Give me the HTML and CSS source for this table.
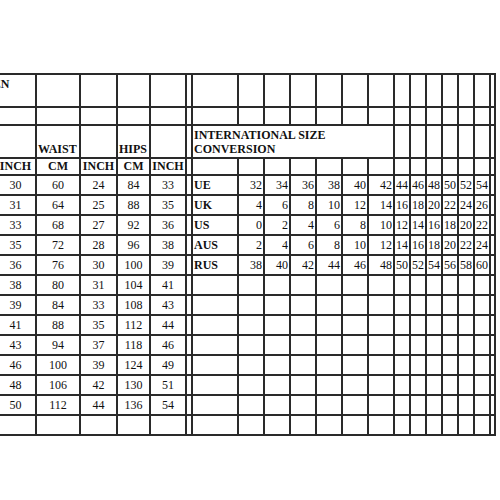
FILE: index.html
```html
<!DOCTYPE html>
<html lang="en">
<head>
<meta charset="utf-8">
<title>Size chart</title>
<link rel="stylesheet" href="styles.css">
</head>
<body>
<table class="chart">
  <colgroup>
    <col class="c-bust"><col class="c-inch1"><col class="c-cm2"><col class="c-inch2"><col class="c-cm3"><col class="c-inch3">
    <col class="c-spacer">
    <col class="c-label">
    <col class="c-wide"><col class="c-wide"><col class="c-wide"><col class="c-wide"><col class="c-wide"><col class="c-wide">
    <col class="c-narrow"><col class="c-narrow"><col class="c-narrow"><col class="c-narrow"><col class="c-narrow"><col class="c-narrow">
    <col class="c-edge">
  </colgroup>
  <tbody>
    <tr class="row-tall">
      <td class="title" colspan="2">WOMEN</td>
      <td></td><td></td><td></td><td></td><td></td>
      <td></td><td></td><td></td><td></td><td></td><td></td><td></td>
      <td></td><td></td><td></td><td></td><td></td><td></td><td></td>
    </tr>
    <tr class="row-gap">
      <td></td><td></td><td></td><td></td><td></td><td></td><td></td>
      <td></td><td></td><td></td><td></td><td></td><td></td><td></td>
      <td></td><td></td><td></td><td></td><td></td><td></td><td></td>
    </tr>
    <tr class="row-tall">
      <td></td><td></td>
      <td class="group">WAIST</td><td></td>
      <td class="group">HIPS</td><td></td>
      <td></td>
      <td class="group conv" colspan="7">INTERNATIONAL SIZE CONVERSION</td>
      <td></td><td></td><td></td><td></td><td></td><td></td><td></td>
    </tr>
    <tr class="row-sub">
      <td></td><td class="unit">INCH</td><td class="unit">CM</td><td class="unit">INCH</td><td class="unit">CM</td><td class="unit">INCH</td>
      <td></td>
      <td></td><td></td><td></td><td></td><td></td><td></td><td></td>
      <td></td><td></td><td></td><td></td><td></td><td></td><td></td>
    </tr>
    <tr>
      <td></td><td>30</td><td>60</td><td>24</td><td>84</td><td>33</td><td></td>
      <td class="lbl">UE</td><td class="num">32</td><td class="num">34</td><td class="num">36</td><td class="num">38</td><td class="num">40</td><td class="num">42</td>
      <td class="num">44</td><td class="num">46</td><td class="num">48</td><td class="num">50</td><td class="num">52</td><td class="num">54</td><td></td>
    </tr>
    <tr>
      <td></td><td>31</td><td>64</td><td>25</td><td>88</td><td>35</td><td></td>
      <td class="lbl">UK</td><td class="num">4</td><td class="num">6</td><td class="num">8</td><td class="num">10</td><td class="num">12</td><td class="num">14</td>
      <td class="num">16</td><td class="num">18</td><td class="num">20</td><td class="num">22</td><td class="num">24</td><td class="num">26</td><td></td>
    </tr>
    <tr>
      <td></td><td>33</td><td>68</td><td>27</td><td>92</td><td>36</td><td></td>
      <td class="lbl">US</td><td class="num">0</td><td class="num">2</td><td class="num">4</td><td class="num">6</td><td class="num">8</td><td class="num">10</td>
      <td class="num">12</td><td class="num">14</td><td class="num">16</td><td class="num">18</td><td class="num">20</td><td class="num">22</td><td></td>
    </tr>
    <tr>
      <td></td><td>35</td><td>72</td><td>28</td><td>96</td><td>38</td><td></td>
      <td class="lbl">AUS</td><td class="num">2</td><td class="num">4</td><td class="num">6</td><td class="num">8</td><td class="num">10</td><td class="num">12</td>
      <td class="num">14</td><td class="num">16</td><td class="num">18</td><td class="num">20</td><td class="num">22</td><td class="num">24</td><td></td>
    </tr>
    <tr>
      <td></td><td>36</td><td>76</td><td>30</td><td>100</td><td>39</td><td></td>
      <td class="lbl">RUS</td><td class="num">38</td><td class="num">40</td><td class="num">42</td><td class="num">44</td><td class="num">46</td><td class="num">48</td>
      <td class="num">50</td><td class="num">52</td><td class="num">54</td><td class="num">56</td><td class="num">58</td><td class="num">60</td><td></td>
    </tr>
    <tr>
      <td></td><td>38</td><td>80</td><td>31</td><td>104</td><td>41</td><td></td>
      <td></td><td></td><td></td><td></td><td></td><td></td><td></td>
      <td></td><td></td><td></td><td></td><td></td><td></td><td></td>
    </tr>
    <tr>
      <td></td><td>39</td><td>84</td><td>33</td><td>108</td><td>43</td><td></td>
      <td></td><td></td><td></td><td></td><td></td><td></td><td></td>
      <td></td><td></td><td></td><td></td><td></td><td></td><td></td>
    </tr>
    <tr>
      <td></td><td>41</td><td>88</td><td>35</td><td>112</td><td>44</td><td></td>
      <td></td><td></td><td></td><td></td><td></td><td></td><td></td>
      <td></td><td></td><td></td><td></td><td></td><td></td><td></td>
    </tr>
    <tr>
      <td></td><td>43</td><td>94</td><td>37</td><td>118</td><td>46</td><td></td>
      <td></td><td></td><td></td><td></td><td></td><td></td><td></td>
      <td></td><td></td><td></td><td></td><td></td><td></td><td></td>
    </tr>
    <tr>
      <td></td><td>46</td><td>100</td><td>39</td><td>124</td><td>49</td><td></td>
      <td></td><td></td><td></td><td></td><td></td><td></td><td></td>
      <td></td><td></td><td></td><td></td><td></td><td></td><td></td>
    </tr>
    <tr>
      <td></td><td>48</td><td>106</td><td>42</td><td>130</td><td>51</td><td></td>
      <td></td><td></td><td></td><td></td><td></td><td></td><td></td>
      <td></td><td></td><td></td><td></td><td></td><td></td><td></td>
    </tr>
    <tr>
      <td></td><td>50</td><td>112</td><td>44</td><td>136</td><td>54</td><td></td>
      <td></td><td></td><td></td><td></td><td></td><td></td><td></td>
      <td></td><td></td><td></td><td></td><td></td><td></td><td></td>
    </tr>
    <tr>
      <td></td><td></td><td></td><td></td><td></td><td></td><td></td>
      <td></td><td></td><td></td><td></td><td></td><td></td><td></td>
      <td></td><td></td><td></td><td></td><td></td><td></td><td></td>
    </tr>
  </tbody>
</table>
</body>
</html>
```
FILE: styles.css
```css
html, body {
  margin: 0;
  background: #ffffff;
}

body {
  font-family: "Liberation Serif", "Times New Roman", serif;
  font-size: 12px;
  color: #111111;
  overflow: hidden;
}

.chart {
  border-collapse: collapse;
  table-layout: fixed;
  width: 537px;
  margin: 73px 0 0 -43px;
}

.c-bust { width: 37px; }
.c-inch1 { width: 41px; }
.c-cm2 { width: 44px; }
.c-inch2 { width: 37px; }
.c-cm3 { width: 33px; }
.c-inch3 { width: 36px; }
.c-spacer { width: 6px; }
.c-label { width: 46px; }
.c-wide { width: 26px; }
.c-narrow { width: 16px; }
.c-edge { width: 5px; }

.chart tr {
  height: 20px;
}

.chart .row-tall { height: 33px; }
.chart .row-gap { height: 18px; }
.chart .row-sub { height: 17px; }

.chart td {
  border: 2px solid #2a2a2a;
  padding: 0 1px;
  line-height: 13px;
  text-align: center;
  vertical-align: middle;
  white-space: nowrap;
  overflow: hidden;
}

.chart .title {
  font-weight: bold;
  text-align: left;
  vertical-align: top;
  padding-top: 3px;
}

.chart .group {
  font-weight: bold;
  text-align: left;
  vertical-align: bottom;
  padding: 0 1px 1px 1px;
  white-space: normal;
}

.chart .conv {
  line-height: 14px;
}

.chart .unit {
  font-weight: bold;
}

.chart .lbl {
  font-weight: bold;
  text-align: left;
  padding-left: 1px;
}

.chart .num {
  text-align: right;
  padding: 0 1px 0 0;
}
```
